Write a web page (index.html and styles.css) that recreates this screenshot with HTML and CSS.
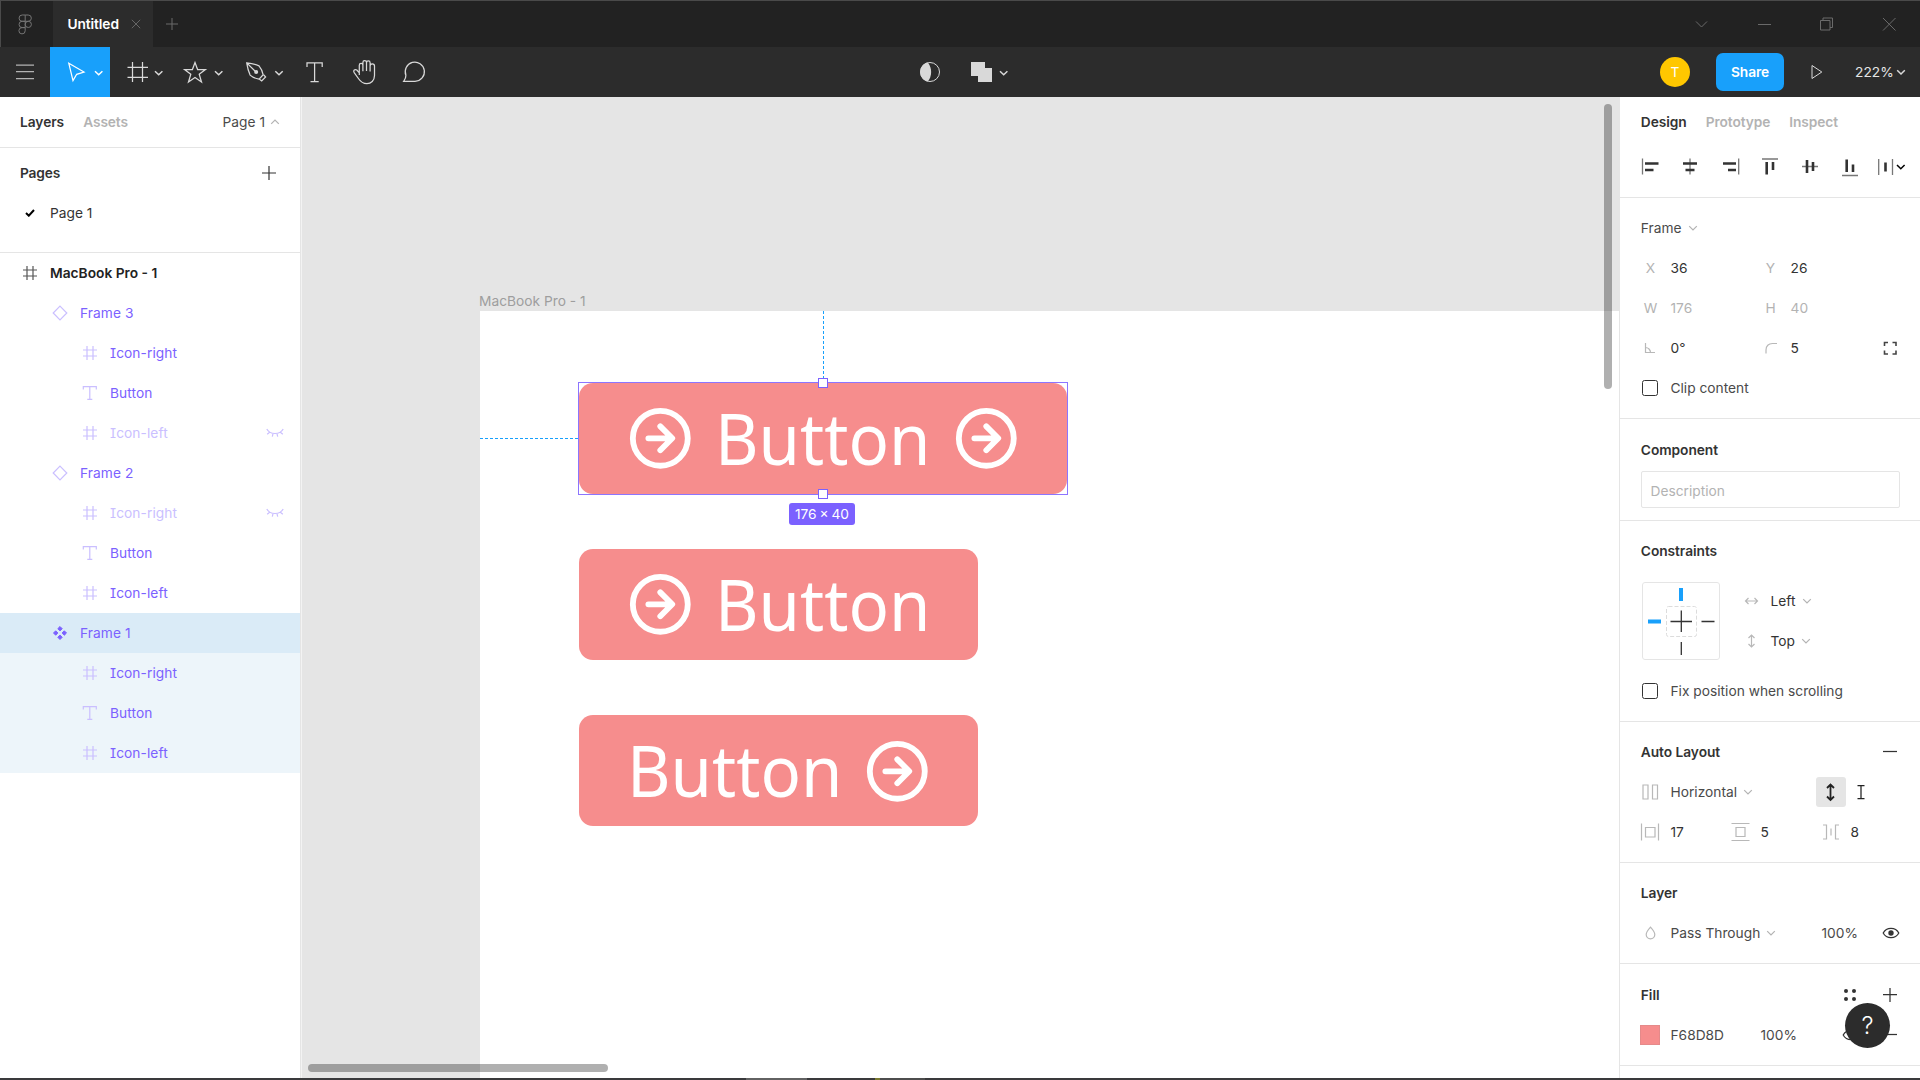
FILE: index.html
```html
<!DOCTYPE html>
<html lang="en">
<head>
<meta charset="utf-8">
<title>Untitled</title>
<link rel="stylesheet" href="styles.css">
</head>
<body>
<svg class="defs" aria-hidden="true">
  <symbol id="chev" viewBox="0 0 10 10"><path d="M1.2 3.2 5 7 8.8 3.2"/></symbol>
  <symbol id="hash" viewBox="0 0 16 16"><path d="M5 1v14M11 1v14M1 5h14M1 11h14"/></symbol>
  <symbol id="type" viewBox="0 0 16 16"><path d="M1.3 4.6V1.6h13v3M7.8 1.6v12.8M5.3 14.4h5"/></symbol>
  <symbol id="diamond" viewBox="0 0 16 16"><path d="M8 1.2 14.8 8 8 14.8 1.2 8z"/></symbol>
  <symbol id="closed" viewBox="0 0 18 10"><path d="M.8 1C4 7 14 7 17.200 1M3.600 4.200 1.200 6.300M7 5.600 6.300 8.600M11 5.600l.7 3M14.400 4.200l2.400 2.100"/></symbol>
  <symbol id="eye" viewBox="0 0 18 12"><path d="M1.200 6C4.500-.2 13.500-.2 16.800 6 13.500 12.200 4.500 12.200 1.200 6z"/><circle class="solid" cx="9" cy="6" r="2.700"/></symbol>
  <symbol id="arrow" viewBox="0 0 24 24"><circle cx="12" cy="12" r="9.900" stroke-width="2.100"/><path d="M7.700 12h8.200M12 7.700l4.300 4.300-4.300 4.300" stroke-width="2.100" stroke-linecap="round" stroke-linejoin="round"/></symbol>
</svg>

<div class="app">
  <header class="titlebar">
    <svg class="home" viewBox="1 1 52 46"><path d="M25.200 15h-3a3.100 3.100 0 0 0 0 6.300h3zM25.200 15h3a3.100 3.100 0 0 1 0 6.300h-3M25.200 21.300h-3a3.100 3.100 0 0 0 0 6.300h3zM25.200 27.600h-3a3.150 3.150 0 1 0 3 3.150z"/><circle cx="28.300" cy="24.400" r="3.100"/></svg>
    <div class="tab"><span>Untitled</span><svg viewBox="0 0 10 10"><path d="M.8.8l8.400 8.400M9.200.8.8 9.200"/></svg></div>
    <svg class="newtab" viewBox="0 0 12 12"><path d="M6 0v12M0 6h12"/></svg>
    <svg class="window-controls" viewBox="1690 1 230 46"><path d="M1696 21.500l5.500 5.500 5.500-5.500M1758 24.500h13M1820.500 20.500h9.500v9.500h-9.500zM1823 20v-2h9.500v9.500H1830M1883 18l12.500 12.500M1895.500 18 1883 30.500"/></svg>
  </header>

  <nav class="toolbar">
    <svg class="tool menu" viewBox="0 47 50 50"><path d="M16 65h18M16 71.500h18M16 78.500h18"/></svg>
    <svg class="tool wide active" viewBox="50 47 60 50"><path d="M68.800 63.300 84 72l-7.300 2.300L73 80.600z"/><path class="bold" d="M95 71.200l3.700 3.500 3.700-3.500"/></svg>
    <svg class="tool wide" viewBox="110 47 60 50"><path d="M132.500 62v20M142.500 62v20M127.500 67.300h20.500M127.500 77.300h20.500"/><path class="bold" d="M155 71.200l3.700 3.500 3.700-3.500"/></svg>
    <svg class="tool wide" viewBox="170 47 60 50"><path d="M195 62.500l2.600 7h7.800l-6.200 4.800 2.300 7.700-6.500-4.600-6.500 4.600 2.300-7.700-6.200-4.800h7.800z"/><path class="bold" d="M215 71.200l3.700 3.500 3.700-3.500"/></svg>
    <svg class="tool wide" viewBox="230 47 60 50"><path d="M246.700 62.900c4.500.5 8.500 1.300 12.300 2.900 2.400 2.800 3.500 5.600 4.200 9l-4.100 4.300c-3.600-.5-6.600-1.800-9-4-1.700-3.800-2.700-7.700-3.400-12.200zM246.700 62.900l8.500 8.300M259.500 79.300l2.200 1.700 3.900-4-1.800-2.200"/><circle class="fill" cx="256.200" cy="72" r="2"/><path class="bold" d="M275.300 71.200l3.700 3.500 3.700-3.500"/></svg>
    <svg class="tool" viewBox="290 47 50 50"><path d="M307 67v-4.200h15.200V67M314.600 62.800v18.500M310.500 81.500h8.200"/></svg>
    <svg class="tool" viewBox="340 47 50 50"><path d="M359.300 75v-9.800a1.800 1.800 0 0 1 3.600 0v6M362.900 70.500v-8a1.800 1.800 0 0 1 3.600 0v8.500M366.500 70.500v-7.700a1.800 1.800 0 0 1 3.600 0v8.700M370.100 71v-5a2.100 2.100 0 0 1 4.400 0v9.500c0 5-3.500 8.200-7.600 8.200-4.600 0-6.700-2.500-8.500-5.200l-4.200-5.800c-1.500-2.200.8-3.900 2.600-2.700l2.500 2.800"/></svg>
    <svg class="tool" viewBox="390 47 50 50"><path d="M403.700 81.300H415a9.600 9.600 0 1 0-9.100-6c.1 2.300-.8 4.200-2.200 6z"/></svg>
    <svg class="center-tools" viewBox="910 47 110 50"><circle cx="930" cy="72" r="9.500"/><path class="fill" d="M927.700 62.500c4.600 5 4.600 14 0 19-10-2-10-17 0-19z"/><path class="fill" d="M971 62h14v6h7v14h-14v-6h-7z"/><path class="bold" d="M1000 71.200l3.700 3.500 3.700-3.500"/></svg>
    <div class="account">
      <span class="avatar">T</span>
      <button class="share">Share</button>
      <svg class="play" viewBox="0 0 12 16"><path d="M1 1.500v13L10.800 8z"/></svg>
      <span class="zoom">222%</span>
      <svg class="zoom-chev"><use href="#chev"/></svg>
    </div>
  </nav>

  <main class="workspace">
    <aside class="left">
      <div class="left-tabs"><b>Layers</b><b class="off">Assets</b><span class="page-name">Page 1</span><svg class="chev flip"><use href="#chev"/></svg></div>
      <section class="pages">
        <div class="pages-head"><b>Pages</b><svg viewBox="0 0 14 14"><path d="M7 0v14M0 7h14"/></svg></div>
        <div class="page-row"><svg viewBox="0 0 10 8"><path d="M1 4l2.800 2.700L9 1"/></svg><span>Page 1</span></div>
      </section>
      <section class="layers">
        <div class="layer root"><svg><use href="#hash"/></svg><span>MacBook Pro - 1</span></div>
        <div class="layer l1"><svg><use href="#diamond"/></svg><span>Frame 3</span></div>
        <div class="layer l2"><svg><use href="#hash"/></svg><span>Icon-right</span></div>
        <div class="layer l2"><svg><use href="#type"/></svg><span>Button</span></div>
        <div class="layer l2 hidden"><svg><use href="#hash"/></svg><span>Icon-left</span><svg class="lid"><use href="#closed"/></svg></div>
        <div class="layer l1"><svg><use href="#diamond"/></svg><span>Frame 2</span></div>
        <div class="layer l2 hidden"><svg><use href="#hash"/></svg><span>Icon-right</span><svg class="lid"><use href="#closed"/></svg></div>
        <div class="layer l2"><svg><use href="#type"/></svg><span>Button</span></div>
        <div class="layer l2"><svg><use href="#hash"/></svg><span>Icon-left</span></div>
        <div class="layer l1 selected"><svg class="main-comp" viewBox="0 0 16 16"><path d="M8 1.500l2.200 2.200L8 5.900 5.800 3.700zM8 10.100l2.200 2.200L8 14.500l-2.200-2.200zM3.700 5.800 5.900 8l-2.200 2.200L1.500 8zM12.300 5.800 14.500 8l-2.200 2.200L10.100 8z"/></svg><span>Frame 1</span></div>
        <div class="layer l2 within"><svg><use href="#hash"/></svg><span>Icon-right</span></div>
        <div class="layer l2 within"><svg><use href="#type"/></svg><span>Button</span></div>
        <div class="layer l2 within"><svg><use href="#hash"/></svg><span>Icon-left</span></div>
      </section>
    </aside>

    <section class="canvas">
      <span class="frame-label">MacBook Pro - 1</span>
      <div class="artboard"></div>
      <div class="btn btn-a"><svg><use href="#arrow"/></svg><span class="btn-box"><span class="btn-text">Button</span></span><svg><use href="#arrow"/></svg></div>
      <div class="btn btn-b"><svg><use href="#arrow"/></svg><span class="btn-box"><span class="btn-text">Button</span></span></div>
      <div class="btn btn-c"><span class="btn-box"><span class="btn-text">Button</span></span><svg><use href="#arrow"/></svg></div>
      <div class="guide-v"></div>
      <div class="guide-h"></div>
      <div class="selection"></div>
      <i class="handle top"></i><i class="handle bottom"></i>
      <span class="size">176 × 40</span>
      <div class="scroll-v"></div>
      <div class="scroll-h"></div>
    </section>

    <aside class="right">
      <section class="head">
        <div class="right-tabs"><b>Design</b><b class="off">Prototype</b><b class="off">Inspect</b></div>
        <svg class="align" viewBox="1640 156 270 22">
          <path class="thin" d="M1642.500 158.500v16M1690 158.500v16M1738.700 158.500v16M1762 159h16M1802 166.500h16M1842 175.500h16M1878.700 159v16M1892.500 159v16"/>
          <path class="thick" d="M1645 163.500h13.500M1645 170h8.500M1683 163.500h14M1685.500 170h9M1723 163.500h13M1728 170h8M1766.700 162v12.500M1773 162v8M1807 160v13M1813 162v9M1846.700 159.500V172M1853 164.500v7.500M1885.500 162.500v9"/>
          <path class="drop" d="M1897 165l3.800 3.800 3.800-3.800"/>
        </svg>
      </section>
      <section>
        <div class="row"><span class="title">Frame</span><svg class="chev"><use href="#chev"/></svg></div>
        <div class="row props"><i>X</i><span class="val">36</span><i>Y</i><span class="val">26</span></div>
        <div class="row props muted"><i>W</i><span>176</span><i>H</i><span>40</span></div>
        <div class="row props"><svg class="ic" viewBox="0 0 20 20"><path d="M5.500 5v9.500H15M5.500 9.500a5 5 0 0 1 5 5"/></svg><span class="val">0°</span><svg class="ic" viewBox="0 0 20 20"><path d="M6 15.500V12c0-4 2.500-6.500 6.500-6.500H17"/></svg><span class="val">5</span><svg class="ic dark" viewBox="0 0 20 20"><path d="M4.500 8V4.500H8M12.500 4.500H16V8M16 12.500v3.500h-3.500M8 16H4.500v-3.500"/></svg></div>
        <div class="row check"><i class="box"></i><span>Clip content</span></div>
      </section>
      <section class="component">
        <div class="row"><b>Component</b></div>
        <div class="desc">Description</div>
      </section>
      <section>
        <div class="row"><b>Constraints</b></div>
        <div class="constraints">
          <svg class="widget" viewBox="1642 582 78 78"><rect class="ring" x="1642.500" y="582.500" width="77" height="77" rx="2.500"/><rect class="dash" x="1666.500" y="606.500" width="30" height="30" rx="2"/><path class="blue" d="M1681 588v13M1648 621.500h13"/><path class="blk" d="M1681.300 610.500v21.500M1670.500 621.500h21.500M1701.500 621.500h13M1681.300 642v13"/></svg>
          <div class="modes">
            <div class="row"><svg class="ic" viewBox="0 0 20 20"><path d="M4.500 10h12M7.500 7l-3 3 3 3M13.500 7l3 3-3 3"/></svg><span class="val">Left</span><svg class="chev"><use href="#chev"/></svg></div>
            <div class="row"><svg class="ic" viewBox="0 0 20 20"><path d="M10.500 4v12M7.500 7l3-3 3 3M7.500 13l3 3 3-3"/></svg><span class="val">Top</span><svg class="chev near"><use href="#chev"/></svg></div>
          </div>
        </div>
        <div class="row check"><i class="box"></i><span>Fix position when scrolling</span></div>
      </section>
      <section>
        <div class="row between"><b>Auto Layout</b><svg class="sign" viewBox="0 0 14 14"><path d="M0 6.500h14"/></svg></div>
        <div class="row lay"><svg class="ic" viewBox="0 0 20 20"><path d="M3 3h5v14H3zM12.500 3h5v14h-5z"/></svg><span>Horizontal</span><svg class="chev near"><use href="#chev"/></svg>
          <div class="resize"><svg class="hug" viewBox="0 0 30 30"><path d="M14.500 8v14.500M11 11l3.500-3.500 3.500 3.500M11 19.500l3.500 3.500 3.500-3.500"/></svg><svg class="fixed" viewBox="0 0 14 18"><path d="M3.500 2.500h7M7 2.500v13M3.500 15.500h7"/></svg></div></div>
        <div class="row spacing"><svg class="ic" viewBox="0 0 20 20"><path d="M1.500 1.500v17M18.500 1.500v17M5.500 5.500h9.500v9.500H5.500z"/></svg><span class="val">17</span><svg class="ic" viewBox="0 0 20 20"><path d="M1.500 1.500h18M1.500 18.500h18M6 5.500h9v9H6z"/></svg><span class="val">5</span><svg class="ic" viewBox="0 0 20 20"><path d="M3 3h3.500v14H3M19 3h-3.500v14H19M11 6.500v7"/></svg><span class="val">8</span></div>
      </section>
      <section>
        <div class="row"><b>Layer</b></div>
        <div class="row pass"><svg class="ic" viewBox="0 0 20 20"><path d="M10.500 4.200c2.500 2.800 4.300 5 4.300 7.300a4.300 4.300 0 0 1-8.600 0c0-2.300 1.800-4.500 4.300-7.300z"/></svg><span>Pass Through</span><svg class="chev near"><use href="#chev"/></svg><span class="pct">100%</span><svg class="eye"><use href="#eye"/></svg></div>
      </section>
      <section class="fill-section">
        <div class="row between"><b>Fill</b><svg class="dots" viewBox="0 0 12 12"><circle cx="2" cy="2" r="2"/><circle cx="10" cy="2" r="2"/><circle cx="2" cy="10" r="2"/><circle cx="10" cy="10" r="2"/></svg><svg class="sign" viewBox="0 0 14 14"><path d="M0 6.500h14M7 0v14"/></svg></div>
        <div class="row fill-row"><i class="swatch"></i><span>F68D8D</span><span>100%</span><svg class="eye"><use href="#eye"/></svg><svg class="sign" viewBox="0 0 14 14"><path d="M0 6.500h14"/></svg></div>
      </section>
      <button class="help">?</button>
    </aside>
  </main>
  <footer class="taskbar"><i class="seg-a"></i><i class="seg-b"></i><i class="seg-c"></i></footer>
</div>
</body>
</html>
```
FILE: styles.css
```css
* { box-sizing: border-box; }
body {
  margin: 0;
  width: 1920px;
  height: 1080px;
  overflow: hidden;
  background: #fff;
  color: #4a4a4a;
  font: 400 13.75px/20px Inter, "Liberation Sans", sans-serif;
  letter-spacing: 0;
}
b { font-weight: 600; color: #333; letter-spacing: -.05px; }
i { font-style: normal; }
button { border: 0; padding: 0; font: inherit; letter-spacing: inherit; }
svg { display: block; flex: none; fill: none; stroke: currentColor; }
.defs { position: absolute; width: 0; height: 0; }
.solid { fill: currentColor; stroke: none; }
.off { color: #b3b3b3; }
.app { display: flex; flex-direction: column; height: 1080px; }

/* Title bar */
.titlebar {
  display: flex;
  align-items: center;
  height: 47px;
  background: #222;
  border-top: 1px solid #4a4a4a;
  border-left: 1px solid #4a4a4a;
  color: #6a6a6a;
}
.home { width: 52px; height: 46px; color: #757575; }
.tab {
  display: flex;
  align-items: center;
  justify-content: space-between;
  width: 100px;
  height: 46px;
  padding: 0 12px 0 14.500px;
  background: #2c2c2c;
  color: #fff;
  font-weight: 600;
  letter-spacing: -.1px;
}
.tab svg { width: 10px; height: 10px; color: #666; }
.newtab { width: 12px; height: 12px; margin-left: 12.500px; }
.window-controls { width: 230px; height: 46px; margin-left: auto; }

/* Toolbar */
.toolbar { display: flex; height: 50px; background: #2c2c2c; color: #d9d9d9; }
.tool { width: 50px; height: 50px; stroke-width: 1.250; }
.tool.wide { width: 60px; }
.menu { color: #b3b3b3; }
.active { background: #18a0fb; color: #fff; }
.toolbar .bold { stroke-width: 1.500; }
.toolbar .fill { fill: currentColor; stroke: none; }
.center-tools { width: 110px; height: 50px; margin-left: 470px; }
.account { display: flex; align-items: center; margin-left: auto; margin-right: 14px; }
.avatar {
  width: 30px;
  height: 30px;
  border-radius: 50%;
  background: #ffc700;
  color: #fff;
  text-align: center;
  line-height: 30px;
}
.share {
  width: 68px;
  height: 38px;
  margin-left: 26px;
  border-radius: 7px;
  background: #18a0fb;
  color: #fff;
  font-weight: 600;
  letter-spacing: -.1px;
}
.play { width: 12px; height: 16px; margin-left: 27px; }
.zoom { width: 36px; margin-left: 32px; color: #e5e5e5; }
.zoom-chev { width: 10px; height: 10px; margin-left: 5px; stroke-width: 1.500; }

/* Panels */
.workspace { display: flex; height: 981px; }
.left { width: 302px; border-right: 1px solid #f3f3f3; box-shadow: inset -1px 0 #e5e5e5; }
.chev { width: 10px; height: 10px; color: #b3b3b3; stroke-width: 1.200; }
.flip { transform: rotate(180deg); }
.left-tabs {
  display: flex;
  align-items: center;
  height: 51px;
  width: 300px;
  padding: 0 20px;
  border-bottom: 1px solid #e5e5e5;
}
.left-tabs .off { margin-left: 19px; letter-spacing: -.1px; }
.page-name { margin-left: auto; margin-right: 5px; }
.pages { width: 300px; height: 105px; border-bottom: 1px solid #e5e5e5; padding-top: 5px; }
.pages-head { display: flex; align-items: center; justify-content: space-between; height: 40px; padding: 0 24px 0 20px; color: #333; }
.pages-head b { letter-spacing: -.15px; }
.pages-head svg { width: 14px; height: 14px; stroke-width: 1.200; }
.page-row { display: flex; align-items: center; height: 40px; padding-left: 25px; color: #333; }
.page-row svg { width: 10px; height: 8px; margin-right: 15px; color: #000; stroke-width: 2; }
.layer {
  display: flex;
  align-items: center;
  width: 300px;
  height: 40px;
  padding-right: 16px;
  color: #7b61ff;
  letter-spacing: .07px;
  font-feature-settings: "cv08";
}
.layer svg { width: 16px; height: 16px; margin-right: 12px; color: #cabfff; stroke-width: 1.200; }
.layer.root { padding-left: 22px; color: #222; font-weight: 600; letter-spacing: 0; }
.root svg { color: #555; }
.l1 { padding-left: 52px; }
.l2 { padding-left: 82px; }
.hidden span { color: #cabfff; }
.layer .lid { width: 18px; height: 10px; margin: 0 0 0 auto; }
.selected { background: #daebf7; }
.within { background: #edf5fa; }
.layer .main-comp { color: #7b61ff; fill: currentColor; stroke-width: 1; stroke-linejoin: round; }

/* Canvas: objects sit at free positions */
.canvas { position: relative; width: 1317px; overflow: hidden; background: #e5e5e5; }
.canvas > * { position: absolute; }
.frame-label { left: 177px; top: 194px; color: #9e9e9e; white-space: nowrap; }
.artboard { left: 177.500px; top: 214px; right: 0; bottom: 0; background: #fff; }
.btn {
  display: flex;
  align-items: center;
  gap: 22.200px;
  left: 277px;
  width: 399px;
  height: 111px;
  padding: 0 46.700px 0 47.500px;
  border-radius: 14px;
  background: #f68d8d;
  color: #fff;
}
.btn svg { width: 66.600px; height: 66.600px; }
.btn-a { top: 286px; width: 488px; }
.btn-b { top: 452px; }
.btn-c { top: 618.300px; }
.btn-box { flex: none; width: 215.700px; overflow: visible; }
.btn-text {
  display: block;
  width: 240px;
  transform: translateY(-1.500px) scaleX(.944);
  transform-origin: 0 50%;
  font: 400 71px/96px "Noto Sans", sans-serif;
  letter-spacing: 0;
}
.selection { left: 276px; top: 285px; width: 490px; height: 113px; border: 1.500px solid #8c75ff; }
.guide-v { left: 520.500px; top: 214px; height: 68px; border-left: 1px dashed #18a0fb; }
.guide-h { left: 177.500px; top: 341px; width: 98px; border-top: 1px dashed #18a0fb; }
.handle { left: 516px; width: 10px; height: 10px; border: 1px solid #7b61ff; background: #fff; }
.top { top: 281px; }
.bottom { top: 392px; }
.size {
  left: 487px;
  top: 406px;
  width: 66px;
  height: 22px;
  border-radius: 3px;
  background: #7b61ff;
  color: #fff;
  text-align: center;
  line-height: 22px;
  white-space: nowrap;
  word-spacing: -1px;
}
.scroll-v, .scroll-h { border-radius: 4px; background: rgba(0, 0, 0, .31); }
.scroll-v { left: 1302px; top: 6.500px; width: 8px; height: 285px; }
.scroll-h { left: 5.500px; top: 967px; width: 300.500px; height: 8px; }

/* Inspector */
.right { position: relative; width: 301px; border-left: 1px solid #e5e5e5; overflow: hidden; }
.right section { padding: 10px 0 10px 20px; border-bottom: 1px solid #e5e5e5; }
.right .head { height: 101px; padding-top: 5px; }
.right-tabs { display: flex; align-items: center; gap: 19px; height: 40px; }
.right b, .title { margin-left: .8px; }
.right-tabs .off { margin-left: 0; letter-spacing: -.1px; }
.align { width: 270px; height: 22px; margin-top: 14px; }
.thin { stroke: #777; stroke-width: 1.300; }
.thick { stroke: #333; stroke-width: 2.600; }
.drop { stroke: #000; stroke-width: 1.500; }
.row { display: flex; align-items: center; height: 40px; white-space: nowrap; }
.row > .chev { margin-left: 7px; }
.row > .chev.near { margin-left: 6px; }
.val { color: #333; }
.ic { width: 20px; height: 20px; color: #b8b8b8; stroke-width: 1.200; }
.ic.dark { color: #444; stroke-width: 1.600; }
.props { display: grid; grid-template-columns: 30.500px 89.500px 30.500px 89.500px 20px; }
.props i { width: 21px; text-align: center; color: #b3b3b3; }
.muted { color: #b3b3b3; }
.box { width: 16px; height: 16px; margin: 0 12.500px 0 2px; border: 1.500px solid #333; border-radius: 2.500px; }
.right .component { height: 102px; padding-bottom: 0; }
.desc { width: 259px; height: 37px; margin: 0 0 0 1px; padding: 0 8.500px; border: 1px solid #e5e5e5; border-radius: 2px; line-height: 38px; color: #b3b3b3; }
.component .row { height: 42px; }
.constraints { display: flex; height: 100px; padding: 11px 0 0 2px; }
.widget { width: 78px; height: 78px; }
.ring { stroke: #e5e5e5; }
.dash { stroke: #dcdcdc; stroke-dasharray: 4 2; }
.blue { stroke: #18a0fb; stroke-width: 4; }
.blk { stroke: #333; stroke-width: 1.300; }
.modes { margin: -1px 0 0 20.500px; }
.modes .val { margin-left: 10px; }
.between { padding-right: 23px; }
.between b { margin-right: auto; }
.sign { width: 14px; height: 14px; color: #333; stroke-width: 1.250; }
.lay span, .pass > span:first-of-type { margin-left: 10.500px; }
.resize { display: flex; align-items: center; gap: 8px; margin-left: auto; margin-right: 52px; color: #222; }
.hug { width: 30px; height: 30px; border-radius: 3px; background: #e5e5e5; stroke-width: 1.800; }
.fixed { width: 14px; height: 18px; stroke-width: 1.250; }
.spacing { display: grid; grid-template-columns: 30.500px 59.500px 30.500px 59.500px 30.500px 59px; }
.pct { margin-left: auto; width: 36px; }
.eye { width: 18px; height: 12px; color: #333; stroke-width: 1.250; }
.pass .eye { margin: 0 20.500px 0 24px; }
.dots { width: 12px; height: 12px; margin-right: 27px; fill: #333; stroke: none; }
.right .fill-section { padding-top: 10.500px; }
.fill-row { display: grid; grid-template-columns: 30.500px 90px 81px 41px 14px; }
.swatch { width: 20px; height: 20px; border: 1px solid #e58a8a; background: #f68d8d; }
.help {
  position: absolute;
  left: 225px;
  top: 906px;
  width: 45px;
  height: 45px;
  border-radius: 50%;
  background: #2c2c2c;
  color: #fff;
  font-size: 24px;
  font-weight: 300;
}

.taskbar { display: flex; height: 2px; background: #3a3a3c; }
.seg-a { width: 61px; margin-left: 746px; background: #626262; }
.seg-b { width: 5px; margin-left: 68px; background: #7a7a30; }
.seg-c { width: 45px; background: #4d4d4d; }
```
